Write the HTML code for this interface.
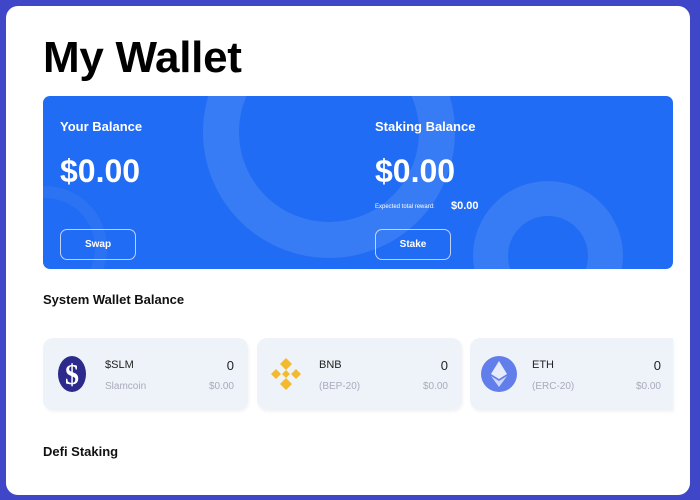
<!DOCTYPE html>
<html><head><style>
body{margin:0;width:700px;height:500px;background:#4046c8;overflow:hidden;font-family:"Liberation Sans",sans-serif;}
.frame{position:absolute;left:6px;top:6px;width:684px;height:489px;background:#fff;border-radius:12px;overflow:hidden;}
h1{position:absolute;left:37px;top:27px;margin:0;font-size:44px;font-weight:bold;color:#000;letter-spacing:-0.3px}
.card{position:absolute;left:37px;top:90px;width:630px;height:173px;background:#216cf4;border-radius:7px;overflow:hidden;color:#fff}
.ring{position:absolute;border-radius:50%;border-style:solid;border-color:rgba(255,255,255,0.1)}
.lbl{position:absolute;font-size:13px;font-weight:bold}
.big{position:absolute;font-size:32px;font-weight:bold}
.btn{position:absolute;width:74px;height:29px;border:1.5px solid rgba(255,255,255,0.7);border-radius:7px;font-size:10px;font-weight:bold;text-align:center;line-height:29px}
h3{position:absolute;margin:0;font-size:13px;font-weight:bold;color:#111}
.coin{position:absolute;top:332px;width:205px;height:72px;background:#eef3fa;border-radius:10px;box-shadow:1px 2px 3px rgba(0,0,0,0.05)}
.coin .ic{position:absolute;left:11px;top:18px;width:36px;height:36px}
.coin .n{position:absolute;left:62px;top:21px;font-size:11px;color:#222}
.coin .s{position:absolute;left:62px;top:43px;font-size:10px;color:#aab}
.coin .v{position:absolute;right:14px;top:20px;font-size:13px;color:#222}
.coin .u{position:absolute;right:14px;top:43px;font-size:10px;color:#aab}
</style></head><body>
<div class="frame">
<h1>My Wallet</h1>
<div class="card">
 <div class="ring" style="left:160px;top:-90px;width:180px;height:180px;border-width:36px"></div>
 <div class="ring" style="left:430px;top:85px;width:80px;height:80px;border-width:35px"></div>
 <div class="ring" style="left:-60px;top:90px;width:100px;height:100px;border-width:12px;border-color:rgba(255,255,255,0.05)"></div>
 <div class="lbl" style="left:17px;top:23px">Your Balance</div>
 <div class="big" style="left:17px;top:57px">$0.00</div>
 <div class="btn" style="left:17px;top:133px">Swap</div>
 <div class="lbl" style="left:332px;top:23px">Staking Balance</div>
 <div class="big" style="left:332px;top:57px">$0.00</div>
 <div style="position:absolute;left:332px;top:108px;font-size:6px">Expected total reward:</div>
 <div style="position:absolute;left:408px;top:104px;font-size:11px;font-weight:bold">$0.00</div>
 <div class="btn" style="left:332px;top:133px">Stake</div>
</div>
<h3 style="left:37px;top:286px">System Wallet Balance</h3>
<div class="coin" style="left:37px">
 <svg class="ic" viewBox="0 0 36 36"><ellipse cx="18" cy="18" rx="14" ry="18" fill="#2c2a8a"/><text x="18" y="28" font-size="28" font-weight="bold" fill="#fff" text-anchor="middle" font-family="Liberation Serif">$</text></svg>
 <div class="n">$SLM</div><div class="s">Slamcoin</div><div class="v">0</div><div class="u">$0.00</div></div>
<div class="coin" style="left:251px">
 <svg class="ic" viewBox="0 0 36 36" fill="#f3ba2f"><path d="M18 2l6 6-6 6-6-6z M18 22l6 6-6 6-6-6z M3 18l5-5 5 5-5 5z M23 18l5-5 5 5-5 5z M18 14l4 4-4 4-4-4z"/></svg>
 <div class="n">BNB</div><div class="s">(BEP-20)</div><div class="v">0</div><div class="u">$0.00</div></div>
<div class="coin" style="left:464px;width:203px;border-radius:10px 0 0 10px">
 <svg class="ic" viewBox="0 0 36 36"><circle cx="18" cy="18" r="18" fill="#627eea"/><path d="M18 5l-8 13 8 5 8-5z" fill="#fff" opacity=".85"/><path d="M10 20l8 11 8-11-8 5z" fill="#fff" opacity=".7"/></svg>
 <div class="n">ETH</div><div class="s">(ERC-20)</div><div class="v" style="right:12px">0</div><div class="u" style="right:12px">$0.00</div></div>
<h3 style="left:37px;top:438px">Defi Staking</h3>
</div>
</body></html>
